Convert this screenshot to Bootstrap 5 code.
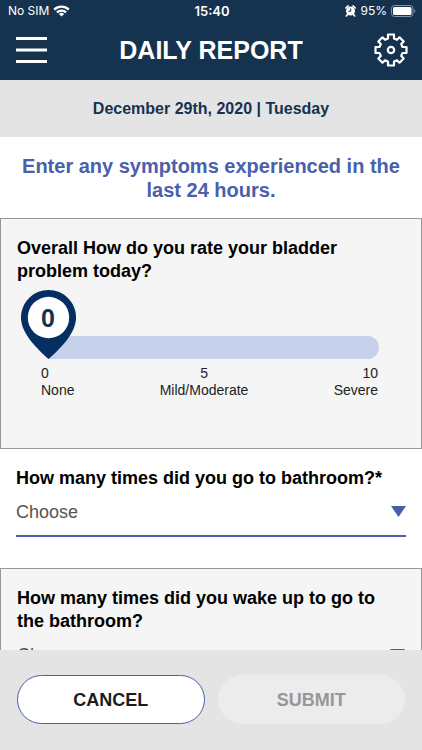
<!DOCTYPE html>
<html lang="en">
<head>
<meta charset="utf-8">
<meta name="viewport" content="width=device-width, initial-scale=1">
<title>Daily Report</title>
<link href="https://cdn.jsdelivr.net/npm/bootstrap@5.3.0/dist/css/bootstrap.min.css" rel="stylesheet">
<style>
  :root { --navy: #15324f; --pin: #042f60; --blue: #4a60aa; --bar: #e4e4e4; }
  body { font-family: "Liberation Sans", Arial, sans-serif; color: #000; }
  .top-bar { background: var(--navy); color: #fff; height: 80px; }
  .status-row { font: 400 12px/22px Inter, sans-serif; height: 22px; padding: 0 6px 0 8px; }
  .status-row .clock { font-weight: 600; font-size: 13px; }
  .status-row > div { flex: 1 1 0; }
  .title-row { padding: 0 14px 0 16px; height: 56px; }
  .title-row h1 { font-size: 25px; line-height: 32px; }
  .icon-btn { line-height: 0; color: #fff; }
  .date-bar { background: var(--bar); color: var(--navy); font-size: 16px; line-height: 24px; padding: 17px 0 16px; }
  .intro { color: var(--blue); font-size: 20px; line-height: 24px; padding: 17px 16px 16px; }
  .scroll-area { min-height: 0; scrollbar-width: none; }
  .scroll-area::-webkit-scrollbar { display: none; }
  .question { padding: 18px 16px 16px; }
  .question.boxed { background: #f5f5f5; border: 1px solid #979797; }
  .question.boxed + .question.boxed, .question + .question.boxed { margin-top: 15px; }
  .question-title { font-size: 18px; line-height: 23px; }
  .rating { min-height: 231px; }
  .slider-wrap { padding: 53px 26px 0 31px; }
  .slider { appearance: none; -webkit-appearance: none; display: block; width: 100%; height: 23px; background: #c8d1ec; border-radius: 0 12px 12px 0; margin: 0; }
  .slider::-webkit-slider-thumb { -webkit-appearance: none; width: 32px; height: 23px; background: transparent; }
  .slider::-moz-range-thumb { border: 0; background: transparent; }
  .pin { left: 4px; bottom: 0; pointer-events: none; }
  .scale { font-size: 14px; line-height: 17px; padding: 6px 27px 0 24px; color: #222; }
  .picker select { appearance: none; -webkit-appearance: none; font-size: 18px; line-height: 24px; color: #555; border-bottom: 2px solid var(--blue) !important; padding: 10px 24px 11px 0; }
  .picker svg { right: 0; top: 16px; pointer-events: none; }
  .action-bar { background: var(--bar); padding: 25px 17px 26px; gap: 13px; }
  .action-bar .btn { font-size: 18px; line-height: 27px; padding: 11px 10px 9px; border-radius: 25px; }
  .btn-cancel, .btn-cancel:hover { background: #fff; color: #1c1c1c; border: 1px solid var(--blue); }
  .btn-submit:disabled { background: #ececec; color: #979797; border-color: #ececec; opacity: 1; }
</style>
</head>
<body>
<div class="d-flex flex-column vh-100">
  <header class="top-bar flex-shrink-0">
    <div class="status-row d-flex align-items-center">
      <div class="d-flex align-items-center gap-1">
        <span>No SIM</span>
        <svg width="17" height="12" viewBox="0 0 17 12" fill="none" stroke="#fff" stroke-width="2.2" aria-hidden="true">
          <path d="M1.2 4.6a10.5 10.5 0 0 1 14.6 0"/><path d="M3.9 7.4a6.7 6.7 0 0 1 9.2 0"/><path d="M8.5 11.6 5.9 9a3.8 3.8 0 0 1 5.2 0z" fill="#fff" stroke="none"/>
        </svg>
      </div>
      <span class="clock">15:40</span>
      <div class="d-flex align-items-center justify-content-end">
        <svg class="me-1" width="11" height="12" viewBox="0 0 11 12" aria-hidden="true">
          <circle cx="5.500" cy="6" r="4.500" fill="#fff"/><path d="M.8 3 3 .9M10.200 3 8 .9M2.300 9.700 1.300 11M8.700 9.700l1 1.300" stroke="#fff" stroke-width="1.600" stroke-linecap="round"/><path d="M5.700 3.500v2.800H3.300" fill="none" stroke="#15324f"/>
        </svg>
        <span>95%</span>
        <svg class="ms-1" width="25" height="12" viewBox="0 0 25 12" aria-hidden="true">
          <rect x=".5" y=".5" width="21.500" height="11" rx="3" fill="none" stroke="#8495a6"/><rect x="2" y="2" width="18.500" height="8" rx="1.500" fill="#fff"/><path d="M23.300 4c1.500.5 1.500 3.500 0 4z" fill="#8495a6"/>
        </svg>
      </div>
    </div>
    <div class="title-row d-flex align-items-center justify-content-between">
      <button type="button" class="icon-btn btn p-0 border-0" aria-label="Menu">
        <svg width="32" height="28" viewBox="0 0 32 28" fill="#fff"><path d="M0 1h31v3H0zM0 12.500h31v3H0zM0 24h31v3H0z"/></svg>
      </button>
      <h1 class="fw-bold m-0">DAILY REPORT</h1>
      <button type="button" class="icon-btn btn p-0 border-0" aria-label="Settings">
        <svg width="34" height="34" viewBox="-17 -17 34 34" fill="none" stroke="#fff" stroke-width="2.2" stroke-linejoin="round">
          <path d="M-3-11.500V-15.500H3V-11.500L6-10.200 8.500-12.700 12.700-8.500 10.200-6 11.500-3H15.500V3H11.500L10.200 6 12.700 8.500 8.500 12.700 6 10.200 3 11.500V15.500H-3V11.500L-6 10.200-8.500 12.700-12.700 8.500-10.200 6-11.500 3H-15.500V-3H-11.500L-10.200-6-12.700-8.500-8.500-12.700-6-10.200Z"/>
          <circle r="3.200"/>
        </svg>
      </button>
    </div>
  </header>

  <div class="date-bar fw-bold text-center flex-shrink-0">December 29th, 2020 | Tuesday</div>

  <main class="scroll-area flex-grow-1 overflow-auto">
    <p class="intro fw-bold text-center m-0">Enter any symptoms experienced in the last 24 hours.</p>

    <section class="question boxed rating">
      <label class="question-title fw-bold d-block" for="rating">Overall How do you rate your bladder problem today?</label>
      <div class="slider-wrap position-relative">
        <input class="slider" type="range" id="rating" min="0" max="10" value="0">
        <svg class="pin position-absolute" width="55" height="69" viewBox="0 0 55 69" aria-hidden="true">
          <path d="M27.500 0C42.500 0 55 12 55 27.500 55 43 40 58 27.500 69 15 58 0 43 0 27.500 0 12 12.500 0 27.500 0z" fill="#042f60"/>
          <circle cx="27.500" cy="27.500" r="20.700" fill="#fff"/>
          <text x="27" y="37" text-anchor="middle" font-size="25" font-weight="700" fill="#15324f">0</text>
        </svg>
      </div>
      <div class="scale d-flex justify-content-between">
        <div>0<br>None</div>
        <div class="text-center">5<br>Mild/Moderate</div>
        <div class="text-end">10<br>Severe</div>
      </div>
    </section>

    <section class="question">
      <label class="question-title fw-bold d-block" for="visits">How many times did you go to bathroom?*</label>
      <div class="picker position-relative">
        <select class="w-100 border-0 bg-transparent rounded-0 d-block" id="visits"><option>Choose</option><option>1</option><option>2</option><option>3</option></select>
        <svg class="position-absolute" width="15" height="11" viewBox="0 0 15 11" aria-hidden="true"><path d="M0 0h15L7.500 11z" fill="#465fab"/></svg>
      </div>
    </section>

    <section class="question boxed">
      <label class="question-title fw-bold d-block" for="wakes">How many times did you wake up to go to the bathroom?</label>
      <div class="picker position-relative">
        <select class="w-100 border-0 bg-transparent rounded-0 d-block" id="wakes"><option>Choose</option><option>1</option><option>2</option><option>3</option></select>
        <svg class="position-absolute" width="15" height="11" viewBox="0 0 15 11" aria-hidden="true"><path d="M0 0h15L7.500 11z" fill="#465fab"/></svg>
      </div>
    </section>
  </main>

  <footer class="action-bar d-flex flex-shrink-0">
    <button type="button" class="btn btn-cancel fw-bold w-50">CANCEL</button>
    <button type="button" class="btn btn-submit fw-bold w-50" disabled>SUBMIT</button>
  </footer>
</div>
<script src="https://cdn.jsdelivr.net/npm/bootstrap@5.3.0/dist/js/bootstrap.bundle.min.js"></script>
</body>
</html>
